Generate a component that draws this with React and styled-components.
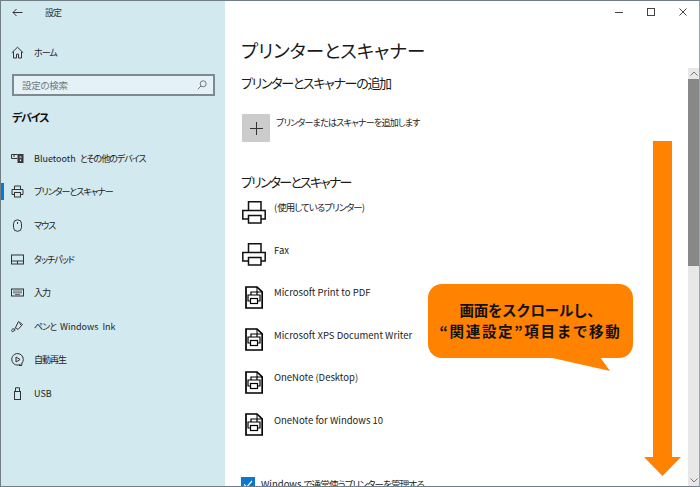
import React from "react";
import styled, { createGlobalStyle } from "styled-components";

const Global = createGlobalStyle`
  html, body { margin: 0; padding: 0; background: #fff; }
  #root { width: 700px; height: 487px; overflow: hidden; }
  * { box-sizing: border-box; }
`;

const Win = styled.div`
  position: relative;
  width: 700px;
  height: 487px;
  display: flex;
  overflow: hidden;
  border: 1px solid #6f7f85;
  border-right-color: #9aa5a9;
  font-family: "Noto Sans CJK JP", "Noto Sans", sans-serif;
  font-feature-settings: "palt";
  color: #1a1a1a;
  background: #fff;
`;

const Side = styled.aside`
  width: 224px;
  flex: none;
  background: #d3e9f0;
  display: flex;
  flex-direction: column;
`;

const TitleBar = styled.div`
  height: 23px;
  display: flex;
  align-items: center;
  padding-left: 11px;
  font-size: 9px;
  color: #333;
  gap: 22px;
`;

const Home = styled.div`
  display: flex;
  align-items: center;
  gap: 10px;
  margin-top: 16px;
  height: 24px;
  padding-left: 10px;
  font-size: 9px;
  color: #222;
`;

const Search = styled.div`
  margin: 10px 10px 0 11px;
  height: 22px;
  border: 2px solid #7d8a90;
  background: #e4f1f6;
  display: flex;
  align-items: center;
  justify-content: space-between;
  padding: 0 6px 0 8px;
  font-size: 9.5px;
  color: #70797d;
`;

const Group = styled.div`
  margin-top: 12px;
  padding-left: 11px;
  font-size: 11px;
  font-weight: 700;
  color: #111;
  height: 18px;
  line-height: 18px;
`;

const Nav = styled.nav`
  margin-top: 15.5px;
  display: flex;
  flex-direction: column;
`;

const NavItem = styled.div`
  position: relative;
  height: 33.6px;
  display: flex;
  align-items: center;
  gap: 10px;
  padding-left: 10px;
  font-size: 9px;
  word-spacing: 2px;
  color: #222;
  ${(p) => p.$active && `
    &::before {
      content: "";
      position: absolute;
      left: 0;
      top: 8px;
      width: 3px;
      height: 17px;
      background: #0b78d0;
    }
  `}
`;

const IconBox = styled.span`
  width: 13px;
  height: 13px;
  flex: none;
  display: flex;
  align-items: center;
  justify-content: center;
  svg { display: block; }
`;

const Main = styled.main`
  flex: 1;
  min-width: 0;
  display: flex;
`;

const Content = styled.div`
  flex: 1;
  min-width: 0;
  padding: 37px 0 0 16px;
  display: flex;
  flex-direction: column;
  overflow: hidden;
  > * { flex: none; }
`;

const H1 = styled.h1`
  margin: 0;
  font-size: 18.5px;
  font-weight: 400;
  line-height: 24px;
  color: #1a1a1a;
`;

const H2 = styled.h2`
  margin: ${(p) => p.$mt}px 0 0;
  font-size: 13px;
  font-weight: 400;
  line-height: 20px;
  color: #1a1a1a;
`;

const AddRow = styled.div`
  margin-top: 21px;
  display: flex;
  gap: 6px;
  padding-left: 1px;
  font-size: 9px;
  line-height: 14px;
  color: #222;
`;

const AddLabel = styled.span`
  margin-top: 2px;
`;

const Plus = styled.div`
  width: 28px;
  height: 28px;
  background: #cccccc;
  display: flex;
  align-items: center;
  justify-content: center;
`;

const List = styled.div`
  margin-top: 7px;
  display: flex;
  flex-direction: column;
`;

const Printer = styled.div`
  height: 42.6px;
  display: flex;
  gap: 7px;
  font-size: 9.5px;
  line-height: 14px;
  color: #222;
`;

const PrinterIcon = styled.span`
  width: 26px;
  height: 26px;
  flex: none;
  display: flex;
  align-items: center;
  justify-content: center;
`;

const PrinterName = styled.span`
  margin-top: 1px;
`;

const Check = styled.div`
  margin-top: 22px;
  display: flex;
  align-items: flex-start;
  gap: 6px;
  font-size: 9.5px;
  line-height: 14px;
  color: #222;
  white-space: nowrap;
`;

const Box = styled.span`
  width: 14px;
  height: 14px;
  background: #0b78d0;
  flex: none;
  display: flex;
  align-items: center;
  justify-content: center;
`;

const Scrollbar = styled.div`
  width: 11px;
  flex: none;
  margin-top: 67px;
  background: #e8e8e8;
  display: flex;
  flex-direction: column;
`;

const ScrollBtn = styled.div`
  height: 11px;
  flex: none;
  display: flex;
  align-items: center;
  justify-content: center;
`;

const Thumb = styled.div`
  height: 187px;
  flex: none;
  background: #888888;
`;

const Spacer = styled.div`
  flex: 1;
`;

const WinControls = styled.div`
  position: absolute;
  top: 7px;
  right: 12px;
  display: flex;
  align-items: center;
  gap: 24px;
  svg { display: block; }
`;

const Callout = styled.div`
  position: absolute;
  left: 427px;
  top: 283px;
  width: 205px;
  height: 74px;
  padding-bottom: 2px;
  background: #ff8200;
  border-radius: 14px;
  display: flex;
  flex-direction: column;
  align-items: center;
  justify-content: center;
  font-size: 14.5px;
  font-weight: 700;
  line-height: 21px;
  color: #111;
  font-feature-settings: normal;
  white-space: nowrap;
`;

const CalloutLine = styled.span`
  letter-spacing: ${(p) => p.$ls || 0}px;
`;

const Tail = styled.svg`
  position: absolute;
  left: 547px;
  top: 356px;
`;

const Arrow = styled.svg`
  position: absolute;
  left: 643px;
  top: 140px;
`;

const Jp = styled.span`
  letter-spacing: ${(p) => p.$ls}px;
`;

const T = ({ ls, children }) => (
  <span>
    {children.split(/([^\x00-\x7f]+)/).map((part, i) =>
      i % 2 ? <Jp key={i} $ls={ls}>{part}</Jp> : part
    )}
  </span>
);

const s = { fill: "none", stroke: "#333", strokeWidth: 1 };

const HomeI = () => (
  <svg width="13" height="13" viewBox="0 0 13 13" {...s}>
    <path d="M.8 6.800 6.500 1.200l5.700 5.600M2.500 5.600v6.400h3V8.200h2V12h3V5.600" />
  </svg>
);
const BtI = () => (
  <svg width="13" height="13" viewBox="0 0 13 13" {...s}>
    <path d="M.5 2.500h6M.5 2.500v4h6" />
    <rect x="7" y="2.500" width="5" height="8" fill="#444" stroke="#333" />
    <path d="M2 4h2" />
    <rect x="9" y="7.500" width="1" height="1.500" fill="#fff" stroke="none" />
    <rect x="8.500" y="4" width="2" height="2" fill="#999" stroke="none" />
  </svg>
);
const PrintSmall = () => (
  <svg width="13" height="13" viewBox="0 0 13 13" {...s}>
    <path d="M3.500 4.500v-3.500h6v3.500M3 9.500H1V4.500h11v5h-2" />
    <rect x="3.500" y="7.500" width="6" height="4.500" />
  </svg>
);
const MouseI = () => (
  <svg width="13" height="13" viewBox="0 0 13 13" {...s}>
    <rect x="2.500" y=".8" width="8" height="11.500" rx="4" />
    <path d="M6.500 3v2" />
  </svg>
);
const PadI = () => (
  <svg width="13" height="13" viewBox="0 0 13 13" {...s}>
    <rect x=".5" y="2" width="12" height="9" />
    <path d="M.5 8h12M6.500 8v3" />
  </svg>
);
const KbI = () => (
  <svg width="13" height="13" viewBox="0 0 13 13" {...s}>
    <rect x=".5" y="3" width="12" height="7" />
    <path d="M2 5h9M2 6.800h9M4 8.500h5" stroke="#666" />
  </svg>
);
const PenI = () => (
  <svg width="13" height="13" viewBox="0 0 13 13" {...s}>
    <path d="M7.500 1.500 11.500 4.500 7 9.500 4.500 7.500ZM4.500 7.500 3 11c-2 1.500-3 0-2-1.500s2.500-.5 3 1" />
    <path d="M8.500 3.500 10 5" />
  </svg>
);
const PlayI = () => (
  <svg width="13" height="13" viewBox="0 0 13 13" {...s}>
    <path d="M9.500 11.300A5.800 5.800 0 1 1 12.300 6.500c0 1.500-.5 2.800-1.400 3.800" />
    <path d="M5 4v5l4-2.500Z" />
    <path d="M8 12.500h2.800v-2.500" />
  </svg>
);
const UsbI = () => (
  <svg width="13" height="13" viewBox="0 0 13 13" {...s}>
    <rect x="3.500" y="4.500" width="6" height="8" />
    <path d="M4.500 4.500V.8h4v3.700" />
  </svg>
);

const Big = () => (
  <svg width="24" height="23" viewBox="0 0 24 23" fill="none" stroke="#111" strokeWidth="1.5">
    <path d="M6.500 9V.8H19V9M6 18H.8V9.500H23.200V18H19" />
    <rect x="6.500" y="14.500" width="12.500" height="7.500" />
  </svg>
);
const Doc = () => (
  <svg width="18" height="23" viewBox="0 0 18 23" fill="none" stroke="#000" strokeWidth="1.700">
    <path d="M1 1H12L17.200 6V22H1Z" />
    <path d="M12 1V6h5" strokeWidth="1" />
    <path d="M6 8.500V6h6v2.500M5 15H3V9h12v6h-2" strokeWidth="1.200" />
    <rect x="5.500" y="12.500" width="7" height="5" strokeWidth="1.200" />
  </svg>
);

const nav = [
  [BtI, "Bluetooth とその他のデバイス"],
  [PrintSmall, "プリンターとスキャナー", true],
  [MouseI, "マウス"],
  [PadI, "タッチパッド"],
  [KbI, "入力"],
  [PenI, "ペンと Windows Ink"],
  [PlayI, "自動再生"],
  [UsbI, "USB"],
];

const printers = [
  [Big, "(使用しているプリンター)"],
  [Big, "Fax"],
  [Doc, "Microsoft Print to PDF"],
  [Doc, "Microsoft XPS Document Writer"],
  [Doc, "OneNote (Desktop)"],
  [Doc, "OneNote for Windows 10"],
];

export default function App() {
  return (
    <Win>
      <Global />
      <Side>
        <TitleBar>
          <svg width="11" height="9" viewBox="0 0 11 9" fill="none" stroke="#333" strokeWidth="1">
            <path d="M10.500 4.500H1M4.500 1 1 4.500 4.500 8" />
          </svg>
          <T ls={-1}>設定</T>
        </TitleBar>
        <Home>
          <IconBox><HomeI /></IconBox>
          <T ls={-1}>ホーム</T>
        </Home>
        <Search>
          <T ls={-0.3}>設定の検索</T>
          <svg width="10" height="10" viewBox="0 0 10 10" fill="none" stroke="#667" strokeWidth=".9">
            <circle cx="6.200" cy="3.800" r="3" />
            <path d="M4 6 .8 9.300" />
          </svg>
        </Search>
        <Group><T ls={-1.2}>デバイス</T></Group>
        <Nav>
          {nav.map(([I, t, a]) => (
            <NavItem key={t} $active={a}>
              <IconBox><I /></IconBox>
              <T ls={-1}>{t}</T>
            </NavItem>
          ))}
        </Nav>
      </Side>
      <Main>
        <Content>
          <H1>プリンターとスキャナー</H1>
          <H2 $mt={11}><T ls={-1.3}>プリンターとスキャナーの追加</T></H2>
          <AddRow>
            <Plus>
              <svg width="13" height="13" viewBox="0 0 13 13" stroke="#333" strokeWidth="1">
                <path d="M6.500 0v13M0 6.500h13" />
              </svg>
            </Plus>
            <AddLabel><T ls={-0.75}>プリンターまたはスキャナーを追加します</T></AddLabel>
          </AddRow>
          <H2 $mt={30}><T ls={-1.8}>プリンターとスキャナー</T></H2>
          <List>
            {printers.map(([I, t]) => (
              <Printer key={t}>
                <PrinterIcon><I /></PrinterIcon>
                <PrinterName><T ls={-1}>{t}</T></PrinterName>
              </Printer>
            ))}
          </List>
          <Check>
            <Box>
              <svg width="10" height="10" viewBox="0 0 10 10" fill="none" stroke="#fff" strokeWidth="1.200">
                <path d="M1 5.500 3.800 8 9 2" />
              </svg>
            </Box>
            <T ls={-0.8}>Windows で通常使うプリンターを管理する</T>
          </Check>
        </Content>
        <Scrollbar>
          <ScrollBtn>
            <svg width="8" height="5" viewBox="0 0 8 5" fill="none" stroke="#777" strokeWidth="1">
              <path d="M.5 4.500 4 1l3.500 3.500" />
            </svg>
          </ScrollBtn>
          <Thumb />
          <Spacer />
          <ScrollBtn>
            <svg width="8" height="5" viewBox="0 0 8 5" fill="none" stroke="#777" strokeWidth="1">
              <path d="M.5.5 4 4 7.500.5" />
            </svg>
          </ScrollBtn>
        </Scrollbar>
      </Main>
      <WinControls>
        <svg width="8" height="8" viewBox="0 0 8 8" stroke="#444" strokeWidth="1"><path d="M0 4.500h8" /></svg>
        <svg width="8" height="8" viewBox="0 0 8 8" fill="none" stroke="#444" strokeWidth="1"><rect x=".5" y=".5" width="7" height="7" /></svg>
        <svg width="8" height="8" viewBox="0 0 8 8" stroke="#444" strokeWidth="1"><path d="M.5.5l7 7M7.500.5l-7 7" /></svg>
      </WinControls>
      <Callout>
        <CalloutLine $ls={-0.3}>画面をスクロールし、</CalloutLine>
        <CalloutLine $ls={1.7}>“関連設定”項目まで移動</CalloutLine>
      </Callout>
      <Tail width="66" height="16" viewBox="0 0 66 16">
        <path d="M0 0H52L62 14Z" fill="#ff8200" />
      </Tail>
      <Arrow width="37" height="338" viewBox="0 0 37 338">
        <path d="M9 0h19v316H37L18.500 335 0 316h9Z" fill="#ff8200" />
      </Arrow>
    </Win>
  );
}
